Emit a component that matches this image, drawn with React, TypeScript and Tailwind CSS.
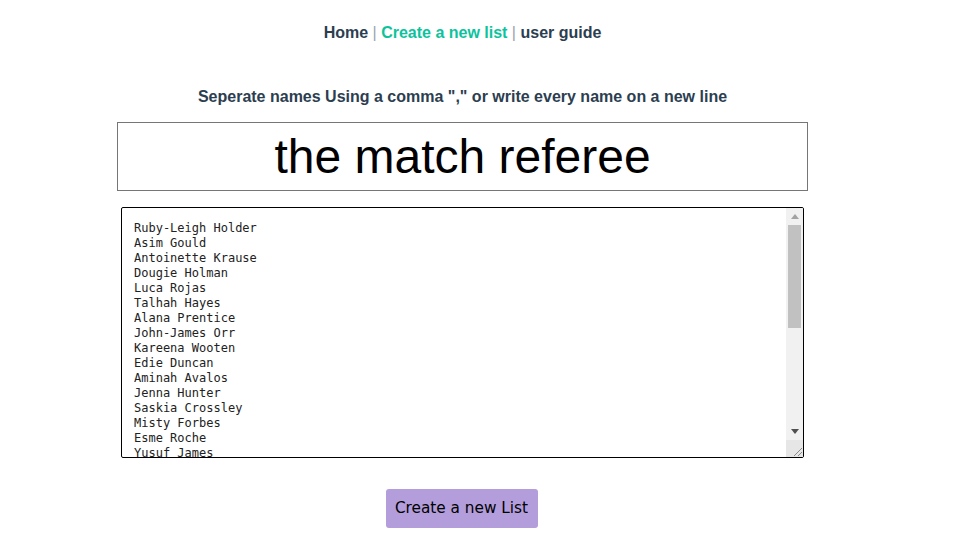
import { useState } from 'react'

const NAMES = [
  'Ruby-Leigh Holder',
  'Asim Gould',
  'Antoinette Krause',
  'Dougie Holman',
  'Luca Rojas',
  'Talhah Hayes',
  'Alana Prentice',
  'John-James Orr',
  'Kareena Wooten',
  'Edie Duncan',
  'Aminah Avalos',
  'Jenna Hunter',
  'Saskia Crossley',
  'Misty Forbes',
  'Esme Roche',
  'Yusuf James',
  'Kian Mcbride',
  'Harley Vargas',
  'Tanisha Bains',
  'Ayla Kirby',
  'Rosie Mays',
  'Felix Hardy',
  'Ruairi Andrews',
  'Lilly-Mae Rivas',
  'Safa Weston',
  'Conor Nelson',
  'Keyaan Emerson',
  'Mehdi Leech',
  'Cerys Small',
  'Ivy-Rose Kane',
  'Ansh Jacobs',
  'Kelsey Greene',
  'Chaya Quinn',
  'Ayub Mcguire',
  'Betsy Hobbs',
  'Tyrone Bone',
]

// classic scrollbar look, drawn beside the text area
function Scrollbar() {
  return (
    <div className="flex w-[17px] flex-col bg-[#f1f1f1]">
      <div className="flex h-[17px] items-center justify-center">
        <svg width="8" height="5" viewBox="0 0 8 5">
          <path d="M4 0 L8 5 L0 5 Z" fill="#a3a3a3" />
        </svg>
      </div>
      <div className="flex-1 px-[2px]">
        <div className="h-[103px] bg-[#c1c1c1]" />
      </div>
      <div className="flex h-[17px] items-center justify-center">
        <svg width="8" height="5" viewBox="0 0 8 5">
          <path d="M0 0 L8 0 L4 5 Z" fill="#505050" />
        </svg>
      </div>
      <div className="flex h-[17px] items-end justify-end bg-[#e6e6e6]">
        <svg width="12" height="12" viewBox="0 0 12 12">
          <path d="M11 3 L3 11 M11 7 L7 11" stroke="#8a8a8a" strokeWidth="1" />
        </svg>
      </div>
    </div>
  )
}

export default function App() {
  const [title, setTitle] = useState('the match referee')
  const [names, setNames] = useState(NAMES.join('\n'))

  return (
    <div className="w-[925px] font-['Liberation_Sans',Arial,sans-serif] text-[#2c3e50]">
      {/* Nav */}
      <nav className="pt-[23px] text-center text-base font-bold leading-5">
        <a className="text-[#2c3e50]">Home</a>
        <span className="font-normal text-[#9aa3ad]"> | </span>
        <a className="text-[#0cc39c]">Create a new list</a>
        <span className="font-normal text-[#9aa3ad]"> | </span>
        <a className="text-[#2c3e50]">user guide</a>
      </nav>

      {/* Form */}
      <div className="mt-[44px] flex flex-col items-center">
        <p className="text-base font-bold leading-5">
          Seperate names Using a comma "," or write every name on a new line
        </p>
        <input
          value={title}
          onChange={(e) => setTitle(e.target.value)}
          className="mt-[15px] h-[69px] w-[691px] border border-[#767676] bg-white text-center text-[48px] leading-none text-black outline-none"
        />
        <div className="mt-[16px] flex h-[251px] w-[683px] overflow-hidden rounded-[2px] border border-black">
          <textarea
            value={names}
            onChange={(e) => setNames(e.target.value)}
            className="h-full flex-1 resize-none overflow-hidden pl-[12px] pr-[12px] pt-[13px] font-['DejaVu_Sans_Mono',monospace] text-[12px] leading-[15px] text-[#222] outline-none"
          />
          <Scrollbar />
        </div>
        <button className="mt-[31px] h-[39px] w-[152px] -translate-x-px rounded-[3px] bg-[#b39ddb] font-['DejaVu_Sans',sans-serif] text-[15.3px] text-black">
          Create a new List
        </button>
      </div>
    </div>
  )
}
